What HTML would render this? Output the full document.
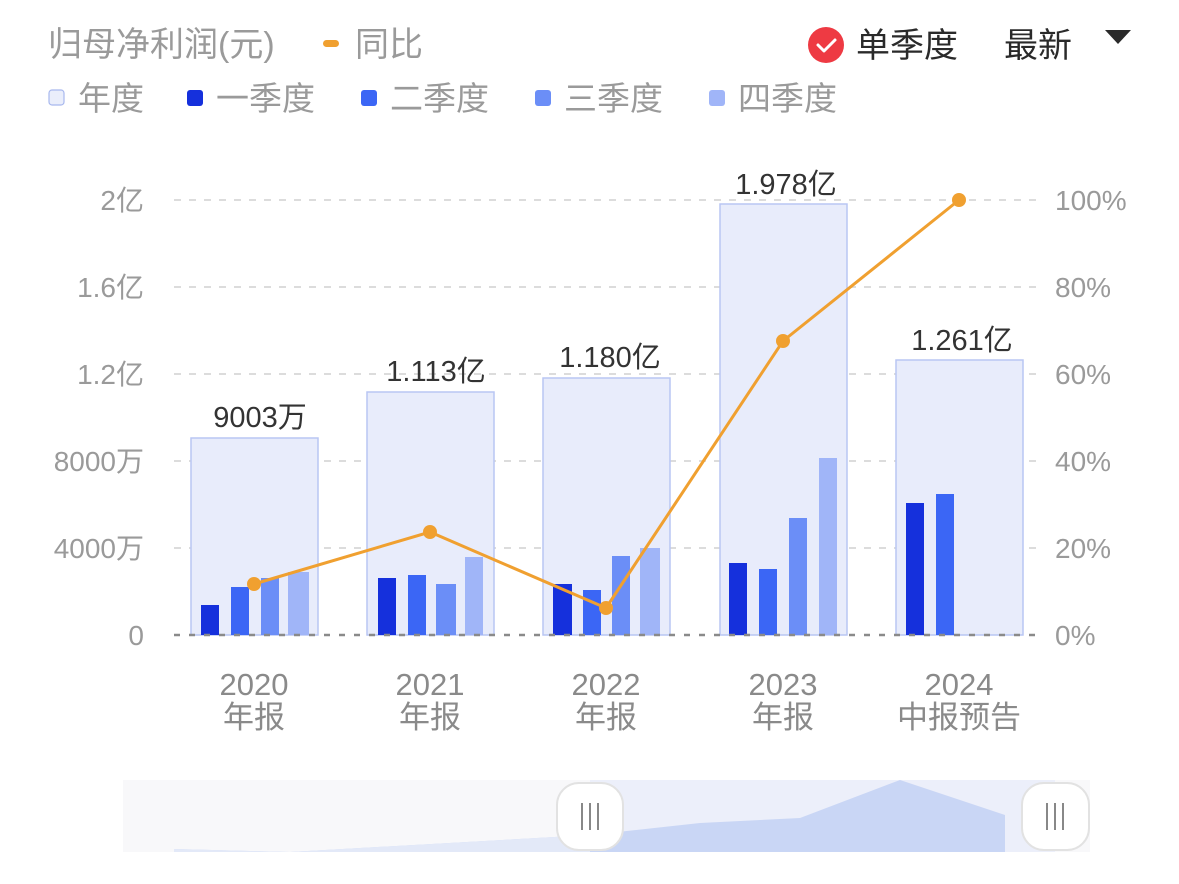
<!DOCTYPE html>
<html><head><meta charset="utf-8"><style>
html,body{margin:0;padding:0;background:#fff;width:1179px;height:884px;overflow:hidden}
svg{display:block}
text{font-family:"Liberation Sans","Noto Sans CJK SC",sans-serif}
</style></head><body>
<svg width="1179" height="884" viewBox="0 0 1179 884" xmlns="http://www.w3.org/2000/svg">
<text x="48" y="56" font-size="34" fill="#9a9a9a">归母净利润(元)</text>
<rect x="323" y="40" width="16" height="7" rx="3.5" fill="#f0a030"/>
<text x="355" y="56" font-size="34" fill="#9a9a9a">同比</text>
<circle cx="826" cy="45" r="18" fill="#ee3a43"/>
<path d="M818 45 L824 51 L835 40" stroke="#fff" stroke-width="3" fill="none" stroke-linecap="round" stroke-linejoin="round"/>
<text x="856" y="57" font-size="34" fill="#2a2a2a">单季度</text>
<text x="1004" y="57" font-size="34" fill="#2a2a2a">最新</text>
<path d="M1105 30 L1131 30 L1118 44 Z" fill="#2a2a2a"/>
<rect x="49" y="90" width="15" height="15" rx="3" fill="#eaeefb" stroke="#a8b8ee" stroke-width="1.2"/>
<text x="78" y="110" font-size="33" fill="#9a9a9a">年度</text>
<rect x="187" y="90" width="16" height="16" rx="3" fill="#1530dc"/>
<text x="216" y="110" font-size="33" fill="#9a9a9a">一季度</text>
<rect x="361" y="90" width="16" height="16" rx="3" fill="#3b66f5"/>
<text x="390" y="110" font-size="33" fill="#9a9a9a">二季度</text>
<rect x="535" y="90" width="16" height="16" rx="3" fill="#6b8ef7"/>
<text x="564" y="110" font-size="33" fill="#9a9a9a">三季度</text>
<rect x="709" y="90" width="16" height="16" rx="3" fill="#a0b5f8"/>
<text x="738" y="110" font-size="33" fill="#9a9a9a">四季度</text>
<g stroke="#dcdcdc" stroke-width="2" stroke-dasharray="7 8">
<line x1="174" y1="200" x2="1036" y2="200"/>
<line x1="174" y1="287" x2="1036" y2="287"/>
<line x1="174" y1="374" x2="1036" y2="374"/>
<line x1="174" y1="461" x2="1036" y2="461"/>
<line x1="174" y1="548" x2="1036" y2="548"/>
</g>
<g font-size="28" fill="#9a9a9a" text-anchor="end">
<text x="144" y="210">2亿</text>
<text x="144" y="297">1.6亿</text>
<text x="144" y="384">1.2亿</text>
<text x="144" y="471">8000万</text>
<text x="144" y="558">4000万</text>
<text x="144" y="645">0</text>
</g>
<g font-size="28" fill="#9a9a9a">
<text x="1055" y="210">100%</text>
<text x="1055" y="297">80%</text>
<text x="1055" y="384">60%</text>
<text x="1055" y="471">40%</text>
<text x="1055" y="558">20%</text>
<text x="1055" y="645">0%</text>
</g>
<g fill="#e8ecfb" stroke="#b9c6f3" stroke-width="1.5">
<rect x="191" y="438" width="127" height="197"/>
<rect x="367" y="392" width="127" height="243"/>
<rect x="543" y="378" width="127" height="257"/>
<rect x="720" y="204" width="127" height="431"/>
<rect x="896" y="360" width="127" height="275"/>
</g>
<g fill="#1530dc">
<rect x="201" y="605" width="18" height="30"/>
<rect x="378" y="578" width="18" height="57"/>
<rect x="553" y="584" width="19" height="51"/>
<rect x="729" y="563" width="18" height="72"/>
<rect x="906" y="503" width="18" height="132"/>
</g>
<g fill="#3b66f5">
<rect x="231" y="587" width="18" height="48"/>
<rect x="408" y="575" width="18" height="60"/>
<rect x="583" y="590" width="18" height="45"/>
<rect x="759" y="569" width="18" height="66"/>
<rect x="936" y="494" width="18" height="141"/>
</g>
<g fill="#6b8ef7">
<rect x="261" y="578" width="18" height="57"/>
<rect x="436" y="584" width="20" height="51"/>
<rect x="612" y="556" width="18" height="79"/>
<rect x="789" y="518" width="18" height="117"/>
</g>
<g fill="#a0b5f8">
<rect x="288" y="572" width="21" height="63"/>
<rect x="465" y="557" width="18" height="78"/>
<rect x="640" y="548" width="20" height="87"/>
<rect x="819" y="458" width="18" height="177"/>
</g>
<line x1="174" y1="635" x2="1036" y2="635" stroke="#8a8a8a" stroke-width="2.5" stroke-dasharray="6 9"/>
<g font-size="29" fill="#333" text-anchor="middle">
<text x="260" y="427">9003万</text>
<text x="436" y="381">1.113亿</text>
<text x="610" y="367">1.180亿</text>
<text x="786" y="194">1.978亿</text>
<text x="962" y="350">1.261亿</text>
</g>
<polyline points="254,584 430,532 606,608 783,341 959,200" fill="none" stroke="#f0a030" stroke-width="3"/>
<g fill="#f0a030">
<circle cx="254" cy="584" r="7"/><circle cx="430" cy="532" r="7"/><circle cx="606" cy="608" r="7"/><circle cx="783" cy="341" r="7"/><circle cx="959" cy="200" r="7"/>
</g>
<g font-size="31" fill="#8a8a8a" text-anchor="middle">
<text x="254" y="695">2020</text><text x="254" y="728">年报</text>
<text x="430" y="695">2021</text><text x="430" y="728">年报</text>
<text x="606" y="695">2022</text><text x="606" y="728">年报</text>
<text x="783" y="695">2023</text><text x="783" y="728">年报</text>
<text x="959" y="695">2024</text><text x="959" y="728">中报预告</text>
</g>
<rect x="123" y="780" width="967" height="72" fill="#f8f8fa"/>
<rect x="590" y="780" width="465" height="72" fill="#eceffa"/>
<polygon points="174,849 290,852 590,835 700,823 800,818 900,780 1005,815 1005,852 174,852" fill="#c9d6f5"/>
<polygon points="174,849 290,852 590,835 590,852 174,852" fill="#e3e9f8"/>
<rect x="557" y="783" width="66" height="67" rx="22" fill="#fff" stroke="#e2e2e2" stroke-width="2"/>
<g stroke="#888" stroke-width="2"><line x1="582" y1="803" x2="582" y2="830"/><line x1="590" y1="803" x2="590" y2="830"/><line x1="598" y1="803" x2="598" y2="830"/></g>
<rect x="1022" y="783" width="67" height="67" rx="22" fill="#fff" stroke="#e2e2e2" stroke-width="2"/>
<g stroke="#888" stroke-width="2"><line x1="1047" y1="803" x2="1047" y2="830"/><line x1="1055" y1="803" x2="1055" y2="830"/><line x1="1063" y1="803" x2="1063" y2="830"/></g>
</svg>
</body></html>
